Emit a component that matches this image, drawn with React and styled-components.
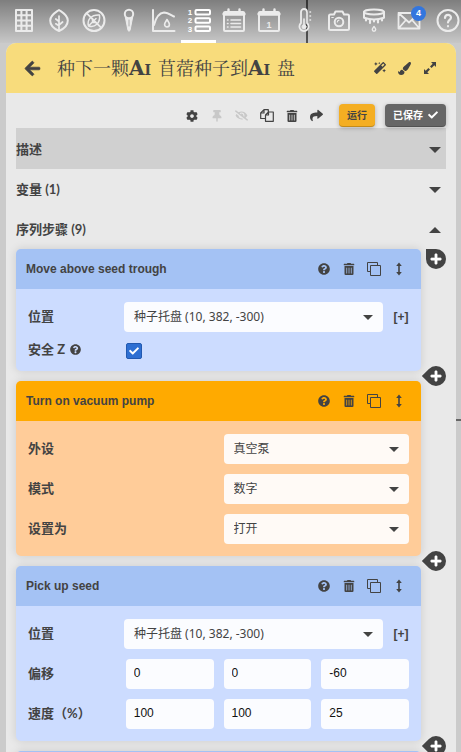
import React, { useState } from "react";
import styled, { createGlobalStyle, css } from "styled-components";
import {
  FaArrowLeft, FaMagic, FaPaintBrush, FaCog, FaThumbtack, FaEyeSlash,
  FaTrashAlt, FaShare, FaCheck, FaQuestionCircle, FaPlus,
} from "react-icons/fa";

const dark = "#434343";
const sans = `"Liberation Sans", "Noto Sans CJK SC", sans-serif`;
const cjk = `"Noto Sans CJK SC", sans-serif`;
const humanist = `"Noto Sans", "Noto Sans CJK SC", sans-serif`;
const heading = `Lato, "Noto Sans CJK SC", sans-serif`;

const palette = {
  blue: { head: "#a4c2f4", body: "#ccdcff", field: "#fbfcff" },
  orange: { head: "#ffaa00", body: "#ffcc99", field: "#fffaf6" },
};

const GlobalStyle = createGlobalStyle`
  * { box-sizing: border-box; }
  body { margin: 0; background: #cbcbcb; color: ${dark}; font-family: ${sans}; }
  button { padding: 0; border: 0; background: none; color: inherit; font: inherit; cursor: pointer; }
`;

const Page = styled.div`
  display: flex;
  flex-direction: column;
  height: 100vh;
  overflow: hidden;
  background:
    linear-gradient(#555, #555) 306px 0 / 2px 60px no-repeat,
    linear-gradient(#666, #666) right 419px / 20px 2px no-repeat,
    #cbcbcb;
`;

const NavBar = styled.nav`
  display: flex;
  flex: none;
  justify-content: space-between;
  height: 43px;
  padding-left: 6px;
  background: linear-gradient(rgba(0, 0, 0, 0.38), rgba(0, 0, 0, 0.02));
`;

const NavGroup = styled.div`
  display: flex;
`;

const NavLink = styled.a`
  position: relative;
  display: flex;
  justify-content: center;
  width: ${(p) => (p.$narrow ? 26 : 35)}px;
  height: 43px;
  padding-top: 8px;
  border-bottom: 3px solid ${(p) => (p.$active ? "#fff" : "transparent")};
  color: ${(p) => (p.$active ? "#fff" : "#ebebeb")};
`;

const Glyph = styled.svg`
  flex: none;
  overflow: visible;
  fill: none;
  stroke: currentColor;
  stroke-width: 2;
  stroke-linejoin: round;
  stroke-linecap: round;
`;

const Digit = styled.text`
  fill: currentColor;
  stroke: none;
  font: bold ${(p) => p.$size}px ${sans};
  text-anchor: middle;
`;

const Badge = styled.span`
  position: absolute;
  top: 6px;
  right: 0;
  width: 15px;
  height: 15px;
  border-radius: 50%;
  background: #3376de;
  color: #fff;
  font: bold 9px/15px ${sans};
  text-align: center;
`;

const Panel = styled.main`
  display: flex;
  flex: 1;
  flex-direction: column;
  min-height: 0;
  margin: 0 5px 0 6px;
  border-radius: 10px 10px 0 0;
  background: #e9e9e9;
  overflow: hidden;
`;

const PanelHeader = styled.header`
  display: flex;
  flex: none;
  align-items: center;
  height: 50px;
  padding: 0 14px;
  background: #f8dc7c;
`;

const IconButton = styled.button`
  display: grid;
  place-items: center;
  width: 25px;
  height: 25px;
  font-size: ${(p) => p.$size || 12}px;
  color: ${(p) => (p.$faded ? "#c8c8c8" : dark)};
`;

const Title = styled.h1`
  flex: 1;
  margin: 0 0 0 12px;
  font: 400 18px/30px "Liberation Serif", "Noto Serif CJK SC", "Noto Sans CJK SC", serif;
  white-space: nowrap;
`;

const Latin = styled.span`
  font-family: "DejaVu Serif", serif;
  font-size: 20px;
  font-weight: 700;
  font-variant: small-caps;
`;

const PanelBody = styled.div`
  flex: 1;
  min-height: 0;
  padding: 0 10px;
  overflow: hidden;
`;

const Toolbar = styled.div`
  display: flex;
  align-items: center;
  justify-content: flex-end;
  height: 35px;
  padding-top: 10px;
`;

const ActionButton = styled.button`
  && {
    display: flex;
    align-items: center;
    justify-content: center;
    gap: 5px;
    height: 23px;
    margin-left: 10px;
    padding: 0 8px;
    border-radius: 4px;
    border-bottom: 1px solid rgba(0, 0, 0, 0.2);
    background: ${(p) => (p.$tone === "run" ? "#f4ae22" : "#666")};
    box-shadow: 0 1px 4px rgba(0, 0, 0, 0.25);
    color: ${(p) => (p.$tone === "run" ? dark : "#fff")};
    font: bold 10px/20px ${cjk};
  }
`;

const SectionToggle = styled.button`
  && {
    display: flex;
    align-items: center;
    justify-content: space-between;
    width: 100%;
    height: ${(p) => (p.$shaded ? 41 : 40)}px;
    padding-right: 5px;
    background: ${(p) => (p.$shaded ? "#d0d0d0" : "transparent")};
    font: bold 13px/20px ${heading};
    text-align: left;
  }
`;

const CaretIcon = styled.svg`
  width: 12px;
  height: 6px;
  margin-top: 2px;
  fill: ${dark};
`;

const StepList = styled.ol`
  display: flex;
  flex-direction: column;
  gap: 10px;
  margin: 0;
  padding: 0;
  list-style: none;
`;

const StepItem = styled.li`
  display: flex;
  gap: 5px;
`;

const Card = styled.section`
  flex: 1;
  min-width: 0;
  border-radius: 5px;
  background: ${(p) => palette[p.$tone].body};
  box-shadow: 0 0 10px rgba(0, 0, 0, 0.13);
`;

const CardHeader = styled.header`
  display: flex;
  align-items: center;
  height: 40px;
  padding: 0 10px;
  border-radius: 5px 5px 0 0;
  background: ${(p) => palette[p.$tone].head};
`;

const CardTitle = styled.h2`
  flex: 1;
  margin: 0;
  font: bold 12px/20px ${sans};
`;

const CardBody = styled.div`
  display: grid;
  gap: 10px;
  padding: 13px 12px 12px;
`;

const rowColumns = {
  location: "86px 1fr 16px",
  quarters: "repeat(4, minmax(0, 1fr))",
};

const Row = styled.div`
  display: grid;
  grid-template-columns: ${(p) => rowColumns[p.$columns || "quarters"]};
  align-items: center;
  gap: 10px;
`;

const Label = styled.label`
  display: flex;
  align-items: center;
  gap: 5px;
  grid-column: span ${(p) => p.$span || 1};
  padding-bottom: 3px;
  font: bold 13px/14px ${heading};
  white-space: nowrap;
`;

const fieldStyle = css`
  width: 100%;
  height: 30px;
  border: 0;
  border-radius: 4px;
  background: ${(p) => palette[p.$tone].field};
`;

const SelectBox = styled.div`
  position: relative;
  grid-column: span ${(p) => p.$span || 1};
`;

const Select = styled.select`
  ${fieldStyle}
  display: block;
  appearance: none;
  padding: 0 30px 0 10px;
  color: ${dark};
  font: 12px/30px ${humanist};
`;

const SelectCaret = styled.svg`
  position: absolute;
  top: 13px;
  right: 10px;
  width: 10px;
  height: 5px;
  fill: ${dark};
  pointer-events: none;
`;

const TextInput = styled.input`
  ${fieldStyle}
  padding: 0 8px 2px;
  color: #111;
  font: 12px/28px ${sans};
`;

const CheckBox = styled.span`
  position: relative;
  display: grid;
  width: 16px;
  height: 16px;
`;

const CheckInput = styled.input`
  appearance: none;
  width: 16px;
  height: 16px;
  margin: 0;
  border: 1px solid #2259b0;
  border-radius: 2px;
  background: ${(p) => (p.checked ? "#2e6fd2" : "#fff")};
`;

const CheckMark = styled(FaCheck)`
  position: absolute;
  top: 3px;
  left: 3px;
  color: #fff;
  font-size: 10px;
  pointer-events: none;
`;

const ExpandButton = styled.button`
  && {
    font: bold 12px/20px ${sans};
    white-space: nowrap;
  }
`;

const AddRail = styled.div`
  display: flex;
  flex-direction: column;
  width: 20px;
`;

const AddButton = styled.button`
  && {
    display: grid;
    place-items: center;
    width: 20px;
    height: 20px;
    background: ${dark};
    color: #fff;
    border-radius: 0 50% 50% 50%;
    ${(p) =>
      p.$between &&
      css`
        margin-top: auto;
        margin-bottom: -15px;
        transform: rotate(-45deg);
        svg { transform: rotate(45deg); }
      `}
  }
`;

const Icon = ({ children }) => (
  <Glyph width="24" height="24" viewBox="0 0 24 24" aria-hidden="true">{children}</Glyph>
);

const icons = {
  grid: (
    <Icon>
      <rect x="4" y="2" width="16" height="21" />
      <path d="M9.400 2v21M14.600 2v21M4 7.200h16M4 12.500h16M4 17.800h16" strokeLinecap="butt" />
    </Icon>
  ),
  leaf: (
    <Icon>
      <path d="M12 2C8.500 4.500 3.200 7 3.200 12.500C3.200 17.500 7.500 21 12 23C16.500 21 20.800 17.500 20.800 12.500C20.800 7 15.500 4.500 12 2Z" />
      <path d="M12 8v14M12 13.500L8.800 11M12 17l3.600-3M12 17.800l-3.200-2" strokeWidth="1.700" />
    </Icon>
  ),
  noWeed: (
    <Icon>
      <circle cx="12" cy="12.500" r="10.500" />
      <path d="M4.800 5.300l14.500 14.500" strokeWidth="1.800" />
      <path d="M6.500 18C4.800 12 9 6.500 17.500 7C18.500 15 13 20 6.500 18ZM6.500 18L14 10.500M10.500 10.500v3.500M14 14.500h-3.500" strokeWidth="1.500" />
    </Icon>
  ),
  point: (
    <Icon>
      <circle cx="12" cy="6" r="4.200" />
      <path d="M8.300 9L11 22.500q1 1.500 2 0L15.700 9L12 11z" fill="currentColor" strokeWidth="1" />
      <path d="M12 12v6" stroke="#aaa" strokeWidth="1" />
    </Icon>
  ),
  curve: (
    <Icon>
      <path d="M1 2v21h21.500M2 17C4 9 7 5 12 4.500C16 4.500 19 7 22 8.500" />
      <path d="M15 11.500c-1.500 2.500-2.400 3.500-2.400 5a2.400 2.400 0 0 0 4.800 0c0-1.500-.900-2.500-2.400-5z" strokeWidth="1.600" />
    </Icon>
  ),
  sequences: (
    <Icon>
      <rect x="8.500" y="2" width="14.500" height="4.500" rx="1" />
      <rect x="8.500" y="10.200" width="14.500" height="4.500" rx="1" />
      <rect x="8.500" y="18.400" width="14.500" height="4.500" rx="1" />
      <Digit x="3" y="7" $size={8}>1</Digit>
      <Digit x="3" y="15.300" $size={8}>2</Digit>
      <Digit x="3" y="23.600" $size={8}>3</Digit>
    </Icon>
  ),
  regimens: (
    <Icon>
      <rect x="2" y="4" width="20" height="19" rx="1" />
      <path d="M2 6h20" strokeWidth="3.400" />
      <path d="M6.500 1.500v3M17.500 1.500v3" strokeWidth="2.400" />
      <path d="M5.500 12h.500M9 12h9.500M5.500 15.500h.500M9 15.500h9.500M5.500 19h.500M9 19h9.500" strokeWidth="1.600" />
    </Icon>
  ),
  calendar: (
    <Icon>
      <rect x="2" y="4" width="20" height="19" rx="1" />
      <path d="M2 6h20" strokeWidth="3.400" />
      <path d="M6.500 1.500v3M17.500 1.500v3" strokeWidth="2.400" />
      <Digit x="12" y="19.500" $size={9}>1</Digit>
    </Icon>
  ),
  sensors: (
    <Icon>
      <path d="M9 15V4a3 3 0 0 1 6 0v11a4.600 4.600 0 1 1-6 0z" strokeWidth="1.800" />
      <circle cx="12" cy="18.800" r="2" fill="currentColor" strokeWidth="1" />
      <path d="M12 18V11M18 4h.500M18 8h.500M18 12h.500" strokeWidth="1.600" />
    </Icon>
  ),
  camera: (
    <Icon>
      <path d="M3.500 6.500H7l1.500-3h7l1.500 3h3.500q1.500 0 1.500 1.500v12.500q0 1.500-1.500 1.500h-17Q2 22 2 20.500V8q0-1.500 1.500-1.500z" />
      <circle cx="12" cy="14" r="4.300" />
      <path d="M4.800 9.500h1.500M10.300 14q.200-1.600 1.700-1.800" strokeWidth="1.200" />
    </Icon>
  ),
  watering: (
    <Icon>
      <ellipse cx="12" cy="4" rx="10" ry="2.400" />
      <path d="M2 4v5.800Q12 13 22 9.800V4" />
      <path d="M4 11v1.500M8 12v3M12 12v1.500M16 12v2.500M20 11v1.500" strokeWidth="2.200" />
      <path d="M12 18.500c-1 1.300-1.700 2-1.700 3a1.700 1.700 0 0 0 3.400 0c0-1-.700-1.700-1.700-3z" strokeWidth="1.400" />
    </Icon>
  ),
  messages: (
    <Icon>
      <path d="M1.500 5h21v15.500h-21zM1.500 5L12 14.500L22.500 5M1.500 20.500l7-8M22.500 20.500l-7-8" strokeWidth="1.800" />
    </Icon>
  ),
  help: (
    <Icon>
      <circle cx="12" cy="12.500" r="10.500" />
      <path d="M9 10c0-4 6-4 6-.500c0 2.500-3 2.300-3 5M12 18.200v.100" strokeWidth="2.200" />
    </Icon>
  ),
};

const navItems = [
  ["grid", "地图"], ["leaf", "植物"], ["noWeed", "杂草"], ["point", "点"], ["curve", "曲线"],
  ["sequences", "序列"], ["regimens", "养护"], ["calendar", "日历"], ["sensors", "传感器"],
  ["camera", "照片"], ["watering", "工具"], ["messages", "消息"],
];

const ThinGlyph = styled.svg`
  fill: none;
  stroke: currentColor;
  stroke-width: ${(p) => p.$weight || 1};
  stroke-linejoin: round;
`;

const CopyIcon = () => (
  <ThinGlyph width="14" height="13" viewBox="0 0 14 13" $weight={1.2} aria-hidden="true">
    <path d="M5 9.500H.700V4L4 .700h4.300V3M4 .700V4H.700M8.500 3h4.800v9.300H5.500V6zM8.500 3v3h-3" />
  </ThinGlyph>
);

const CloneIcon = () => (
  <ThinGlyph width="14" height="14" viewBox="0 0 14 14" aria-hidden="true">
    <path d="M3.500 9.500h-3v-9h10v3M3.500 3.500h10v10h-10z" />
  </ThinGlyph>
);

const ExpandIcon = () => (
  <svg width="12" height="12" viewBox="0 0 12 12" fill="currentColor" aria-hidden="true">
    <path d="M7 0h5v5l-1.700-1.700L7.600 6L6 4.400l2.700-2.700zM5 12H0V7l1.700 1.700L4.400 6L6 7.600L3.300 10.300z" />
  </svg>
);

const MoveIcon = () => (
  <svg width="6" height="14" viewBox="0 0 6 14" fill="currentColor" aria-hidden="true">
    <path d="M3 .500L5.800 4H3.800v6h2L3 13.500L.200 10h2V4h-2z" />
  </svg>
);

const Caret = ({ up }) => (
  <CaretIcon viewBox="0 0 12 6" aria-hidden="true">
    <path d={up ? "M0 6L6 0L12 6z" : "M0 0H12L6 6z"} />
  </CaretIcon>
);

const Plus = () => <FaPlus size={12} stroke="currentColor" strokeWidth={24} />;

function SelectField({ id, tone, value, span }) {
  return (
    <SelectBox $span={span}>
      <Select id={id} $tone={tone} defaultValue={value}>
        <option>{value}</option>
      </Select>
      <SelectCaret viewBox="0 0 10 5"><path d="M0 0H10L5 5z" /></SelectCaret>
    </SelectBox>
  );
}

function LocationRow({ id, tone }) {
  return (
    <Row $columns="location">
      <Label htmlFor={id}>位置</Label>
      <SelectField id={id} tone={tone} value="种子托盘 (10, 382, -300)" />
      <ExpandButton aria-label="展开">[+]</ExpandButton>
    </Row>
  );
}

function ChoiceRow({ id, label, value }) {
  return (
    <Row>
      <Label htmlFor={id} $span={2}>{label}</Label>
      <SelectField id={id} tone="orange" value={value} span={2} />
    </Row>
  );
}

function AxisRow({ id, label, values }) {
  return (
    <Row>
      <Label htmlFor={`${id}-0`}>{label}</Label>
      {values.map((v, i) => (
        <TextInput key={i} id={`${id}-${i}`} aria-label={`${label} ${"XYZ"[i]}`} $tone="blue" defaultValue={v} />
      ))}
    </Row>
  );
}

function SafeZRow() {
  const [checked, setChecked] = useState(true);
  return (
    <Row>
      <Label htmlFor="safe-z">安全 Z <FaQuestionCircle size={11} /></Label>
      <CheckBox>
        <CheckInput id="safe-z" type="checkbox" checked={checked} onChange={(e) => setChecked(e.target.checked)} />
        {checked && <CheckMark />}
      </CheckBox>
    </Row>
  );
}

function Step({ title, tone, first, children }) {
  return (
    <StepItem>
      <Card $tone={tone}>
        <CardHeader $tone={tone}>
          <CardTitle>{title}</CardTitle>
          <IconButton aria-label="帮助"><FaQuestionCircle size={12} /></IconButton>
          <IconButton aria-label="删除"><FaTrashAlt /></IconButton>
          <IconButton aria-label="复制"><CloneIcon /></IconButton>
          <IconButton aria-label="移动"><MoveIcon /></IconButton>
        </CardHeader>
        <CardBody>{children}</CardBody>
      </Card>
      <AddRail>
        {first && <AddButton aria-label="添加步骤"><Plus /></AddButton>}
        <AddButton aria-label="添加步骤" $between><Plus /></AddButton>
      </AddRail>
    </StepItem>
  );
}

export default function App() {
  return (
    <Page>
      <GlobalStyle />
      <NavBar>
        <NavGroup>
          {navItems.map(([name, label]) => (
            <NavLink key={name} href={`#${name}`} aria-label={label} $active={name === "sequences"}>
              {icons[name]}
              {name === "messages" && <Badge>4</Badge>}
            </NavLink>
          ))}
        </NavGroup>
        <NavLink href="#help" aria-label="帮助" $narrow>{icons.help}</NavLink>
      </NavBar>
      <Panel>
        <PanelHeader>
          <IconButton aria-label="返回" $size={17}>
            <FaArrowLeft stroke="currentColor" strokeWidth={20} />
          </IconButton>
          <Title>种下一颗<Latin>Ai </Latin>苜蓿种子到<Latin>Ai </Latin>盘</Title>
          <IconButton aria-label="自动生成"><FaMagic /></IconButton>
          <IconButton aria-label="颜色"><FaPaintBrush size={13} /></IconButton>
          <IconButton aria-label="全屏"><ExpandIcon /></IconButton>
        </PanelHeader>
        <PanelBody>
          <Toolbar>
            <IconButton aria-label="设置"><FaCog /></IconButton>
            <IconButton aria-label="固定" $faded><FaThumbtack /></IconButton>
            <IconButton aria-label="隐藏" $faded $size={13}><FaEyeSlash /></IconButton>
            <IconButton aria-label="复制"><CopyIcon /></IconButton>
            <IconButton aria-label="删除"><FaTrashAlt /></IconButton>
            <IconButton aria-label="分享" $size={13}><FaShare /></IconButton>
            <ActionButton $tone="run">运行</ActionButton>
            <ActionButton $tone="saved">已保存 <FaCheck /></ActionButton>
          </Toolbar>
          <SectionToggle $shaded>描述<Caret /></SectionToggle>
          <SectionToggle>变量 (1)<Caret /></SectionToggle>
          <SectionToggle>序列步骤 (9)<Caret up /></SectionToggle>
          <StepList>
            <Step title="Move above seed trough" tone="blue" first>
              <LocationRow id="move-location" tone="blue" />
              <SafeZRow />
            </Step>
            <Step title="Turn on vacuum pump" tone="orange">
              <ChoiceRow id="peripheral" label="外设" value="真空泵" />
              <ChoiceRow id="mode" label="模式" value="数字" />
              <ChoiceRow id="set-to" label="设置为" value="打开" />
            </Step>
            <Step title="Pick up seed" tone="blue">
              <LocationRow id="pick-location" tone="blue" />
              <AxisRow id="offset" label="偏移" values={["0", "0", "-60"]} />
              <AxisRow id="speed" label="速度（%）" values={["100", "100", "25"]} />
            </Step>
            <Step title="" tone="blue" />
          </StepList>
        </PanelBody>
      </Panel>
    </Page>
  );
}
